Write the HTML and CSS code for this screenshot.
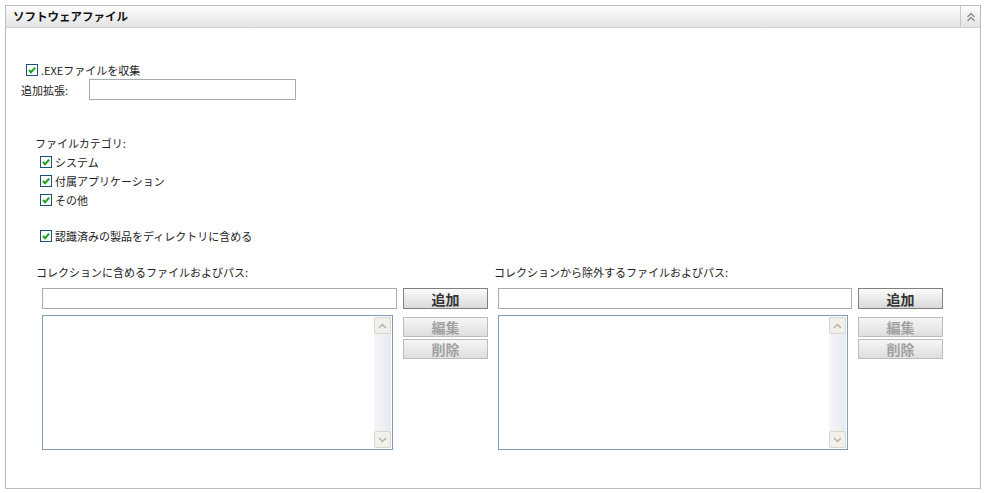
FILE: index.html
```html
<!DOCTYPE html>
<html lang="ja">
  <head>
    <meta charset="UTF-8" />
    <meta name="viewport" content="width=device-width, initial-scale=1.0" />
    <title>ソフトウェアファイル</title>
    <link rel="stylesheet" href="styles.css">
  </head>
  <body>
    <div class="panel">
      <div class="panel-head">
        <span class="panel-title">ソフトウェアファイル</span>
        <span class="collapse">
          <svg width="10" height="10" viewBox="0 0 10 10"><path d="M1.5 5 L5 1.5 L8.5 5 M1.5 9 L5 5.5 L8.5 9" fill="none" stroke="#8a8a8a" stroke-width="1.4"/></svg>
        </span>
      </div>
      <div class="panel-body">
        <div class="check-row exe">
          <span class="cb"><svg width="12" height="12" viewBox="0 0 12 12"><rect x="0.5" y="0.5" width="11" height="11" fill="#fbfbf8" stroke="#1c5180"/><path d="M3 6 L5 8.2 L9.2 3.6" fill="none" stroke="#21a121" stroke-width="2"/></svg></span>
          .EXEファイルを収集
        </div>
        <div class="ext-row">
          <span class="ext-label">追加拡張:</span>
          <input class="text ext-input" type="text" />
        </div>

        <div class="category">
          <div class="cat-title">ファイルカテゴリ:</div>
          <div class="check-row cat">
            <span class="cb"><svg width="12" height="12" viewBox="0 0 12 12"><rect x="0.5" y="0.5" width="11" height="11" fill="#fbfbf8" stroke="#1c5180"/><path d="M3 6 L5 8.2 L9.2 3.6" fill="none" stroke="#21a121" stroke-width="2"/></svg></span>
            システム
          </div>
          <div class="check-row cat">
            <span class="cb"><svg width="12" height="12" viewBox="0 0 12 12"><rect x="0.5" y="0.5" width="11" height="11" fill="#fbfbf8" stroke="#1c5180"/><path d="M3 6 L5 8.2 L9.2 3.6" fill="none" stroke="#21a121" stroke-width="2"/></svg></span>
            付属アプリケーション
          </div>
          <div class="check-row cat">
            <span class="cb"><svg width="12" height="12" viewBox="0 0 12 12"><rect x="0.5" y="0.5" width="11" height="11" fill="#fbfbf8" stroke="#1c5180"/><path d="M3 6 L5 8.2 L9.2 3.6" fill="none" stroke="#21a121" stroke-width="2"/></svg></span>
            その他
          </div>
          <div class="check-row cat known">
            <span class="cb"><svg width="12" height="12" viewBox="0 0 12 12"><rect x="0.5" y="0.5" width="11" height="11" fill="#fbfbf8" stroke="#1c5180"/><path d="M3 6 L5 8.2 L9.2 3.6" fill="none" stroke="#21a121" stroke-width="2"/></svg></span>
            認識済みの製品をディレクトリに含める
          </div>
        </div>

        <div class="paths">
          <div class="path-col">
            <div class="path-label">コレクションに含めるファイルおよびパス:</div>
            <div class="path-box">
              <div class="add-row">
                <input class="text path-input" type="text" />
                <button class="btn">追加</button>
              </div>
              <div class="list-row">
                <div class="listbox">
                  <div class="scroll">
                    <span class="arrow">
                      <svg width="9" height="6" viewBox="0 0 9 6"><path d="M1 5 L4.5 1.5 L8 5" fill="none" stroke="#b5b5ad" stroke-width="1.5"/></svg>
                    </span>
                    <span class="arrow">
                      <svg width="9" height="6" viewBox="0 0 9 6"><path d="M1 1 L4.5 4.5 L8 1" fill="none" stroke="#b5b5ad" stroke-width="1.5"/></svg>
                    </span>
                  </div>
                </div>
                <div class="side-btns">
                  <button class="btn off">編集</button>
                  <button class="btn off">削除</button>
                </div>
              </div>
            </div>
          </div>

          <div class="path-col right">
            <div class="path-label">コレクションから除外するファイルおよびパス:</div>
            <div class="path-box">
              <div class="add-row">
                <input class="text path-input" type="text" />
                <button class="btn">追加</button>
              </div>
              <div class="list-row">
                <div class="listbox">
                  <div class="scroll">
                    <span class="arrow">
                      <svg width="9" height="6" viewBox="0 0 9 6"><path d="M1 5 L4.5 1.5 L8 5" fill="none" stroke="#b5b5ad" stroke-width="1.5"/></svg>
                    </span>
                    <span class="arrow">
                      <svg width="9" height="6" viewBox="0 0 9 6"><path d="M1 1 L4.5 4.5 L8 1" fill="none" stroke="#b5b5ad" stroke-width="1.5"/></svg>
                    </span>
                  </div>
                </div>
                <div class="side-btns">
                  <button class="btn off">編集</button>
                  <button class="btn off">削除</button>
                </div>
              </div>
            </div>
          </div>
        </div>
      </div>
    </div>
  </body>
</html>
```

FILE: styles.css
```css
body {
  margin: 0;
  background-color: white;
  font-family: "Noto Sans CJK JP", "DejaVu Sans", sans-serif;
  font-size: 11px;
  color: #222;
}
.panel {
  margin: 5px 0 0 5px;
  width: 976px;
  height: 484px;
  box-sizing: border-box;
  border: 1px solid #bdbdbd;
}
.panel-head {
  display: flex;
  align-items: stretch;
  height: 21px;
  background: linear-gradient(#fdfdfd, #e3e3e3);
  border-bottom: 1px solid #d4d4d4;
}
.panel-title {
  flex: 1;
  padding-left: 7px;
  font-weight: bold;
  font-size: 11.5px;
  line-height: 21px;
  color: #111;
}
.collapse {
  width: 19px;
  border-left: 1px solid #c8c8c8;
  display: flex;
  align-items: center;
  justify-content: center;
}
.panel-body {
  padding: 34px 0 0 15px;
}
.check-row {
  display: flex;
  align-items: center;
  height: 15px;
}
.cb {
  display: inline-flex;
  width: 12px;
  height: 12px;
  margin-right: 3px;
}
.exe {
  margin-left: 5px;
}
.ext-row {
  display: flex;
  align-items: center;
  margin-top: 2px;
}
.ext-label {
  width: 68px;
}
.text {
  box-sizing: border-box;
  height: 21px;
  border: 1px solid #a5acb2;
  margin: 0;
  padding: 0 3px;
  background: white;
}
.ext-input {
  width: 207px;
}
.category {
  margin-top: 36px;
  padding-left: 14px;
}
.cat-title {
  height: 15px;
  line-height: 15px;
  margin-bottom: 1px;
}
.cat {
  height: 19px;
  margin-left: 5px;
}
.known {
  margin-top: 17px;
}
.paths {
  display: flex;
  margin-top: 20px;
  padding-left: 15px;
}
.path-col {
  width: 458px;
}
.path-label {
  height: 15px;
  line-height: 15px;
}
.path-box {
  margin: 8px 0 0 6px;
}
.right .path-box {
  margin-left: 4px;
}
.add-row {
  display: flex;
  gap: 6px;
}
.path-input {
  width: 355px;
}
.right .path-input {
  width: 354px;
}
.btn {
  box-sizing: border-box;
  width: 85px;
  height: 21px;
  padding: 0;
  border: 1px solid #808080;
  background: linear-gradient(#fbfbfb, #d9d9d9);
  font-family: "Noto Sans CJK JP", sans-serif;
  font-weight: bold;
  font-size: 14px;
  line-height: 18px;
  color: #333;
}
.btn.off {
  height: 20px;
  border-color: #bcbcbc;
  background: linear-gradient(#f6f6f6, #dedede);
  color: #a2a2a2;
  line-height: 17px;
}
.list-row {
  display: flex;
  gap: 10px;
  margin-top: 6px;
}
.listbox {
  box-sizing: border-box;
  width: 351px;
  height: 135px;
  border: 1px solid #7f9db9;
  display: flex;
  justify-content: flex-end;
  padding: 1px;
}
.right .listbox {
  width: 350px;
}
.scroll {
  width: 17px;
  display: flex;
  flex-direction: column;
  justify-content: space-between;
  background: linear-gradient(90deg, #f4f5f8, #e8eaf0);
}
.arrow {
  box-sizing: border-box;
  height: 17px;
  border: 1px solid #d9d6cc;
  border-radius: 2px;
  background: #f1f0ea;
  display: flex;
  align-items: center;
  justify-content: center;
}
.side-btns {
  display: flex;
  flex-direction: column;
  gap: 2px;
  margin-top: 2px;
}
```
